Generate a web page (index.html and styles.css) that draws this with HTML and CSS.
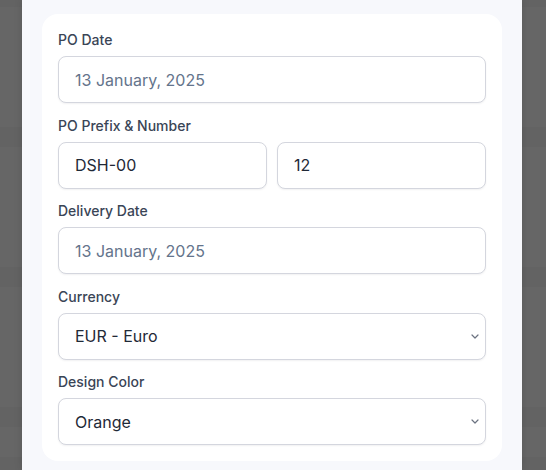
FILE: index.html
```html
<!DOCTYPE html>
<html lang="en">
<head>
<meta charset="utf-8">
<title>PO Settings</title>
<link rel="stylesheet" href="styles.css">
</head>
<body>
<div class="backdrop">
  <div class="panel">
    <form class="card">
      <div class="field">
        <label class="label">PO Date</label>
        <input class="control muted" type="text" value="13 January, 2025">
      </div>
      <div class="field">
        <label class="label">PO Prefix &amp; Number</label>
        <div class="pair">
          <input class="control" type="text" value="DSH-00">
          <input class="control" type="text" value="12">
        </div>
      </div>
      <div class="field">
        <label class="label">Delivery Date</label>
        <input class="control muted" type="text" value="13 January, 2025">
      </div>
      <div class="field">
        <label class="label">Currency</label>
        <div class="select-wrap">
          <select class="control select"><option>EUR - Euro</option></select>
          <svg class="chevron" width="8" height="5" viewBox="0 0 8 5"><path d="M1 1 L4 4 L7 1" fill="none" stroke="#6b7280" stroke-width="1.2" stroke-linecap="round" stroke-linejoin="round"/></svg>
        </div>
      </div>
      <div class="field">
        <label class="label">Design Color</label>
        <div class="select-wrap">
          <select class="control select"><option>Orange</option></select>
          <svg class="chevron" width="8" height="5" viewBox="0 0 8 5"><path d="M1 1 L4 4 L7 1" fill="none" stroke="#6b7280" stroke-width="1.2" stroke-linecap="round" stroke-linejoin="round"/></svg>
        </div>
      </div>
    </form>
  </div>
</div>
</body>
</html>
```

FILE: styles.css
```css
html, body {
  margin: 0;
  height: 100%;
}
body {
  font-family: Inter, "Noto Sans", sans-serif;
  background-color: #666666;
  background-image: repeating-linear-gradient(180deg, #666666 0, #666666 7px, #636363 7px, #636363 27px, #666666 27px, #666666 140px);
  background-position: 0 -20px;
  overflow: hidden;
}
.backdrop {
  height: 100%;
  padding: 0 24px 0 22px;
  box-sizing: border-box;
}
.panel {
  width: 500px;
  height: 100%;
  background: #f7f8fc;
  padding: 14px 20px 0;
  box-sizing: border-box;
  box-shadow: 0 0 8px rgba(0, 0, 0, 0.12);
}
.card {
  background: #ffffff;
  border-radius: 16px;
  padding: 16px;
  display: flex;
  flex-direction: column;
  gap: 12.5px;
  margin: 0;
}
.field {
  display: flex;
  flex-direction: column;
}
.label {
  font-size: 14px;
  line-height: 20px;
  font-weight: 500;
  color: #3a4556;
  margin-bottom: 6px;
}
.control {
  box-sizing: border-box;
  width: 100%;
  height: 47px;
  border: 1px solid #d4d6de;
  border-radius: 8px;
  background: #ffffff;
  padding: 0 16px;
  font-family: Inter, "Noto Sans", sans-serif;
  font-size: 16px;
  color: #1f2937;
  box-shadow: 0 1px 2px rgba(15, 23, 42, 0.06);
  outline: none;
  margin: 0;
}
.muted {
  color: #64748b;
}
.pair {
  display: flex;
  gap: 10px;
}
.pair .control {
  flex: 1;
  min-width: 0;
}
.select-wrap {
  position: relative;
}
.select {
  appearance: none;
  -webkit-appearance: none;
}
.chevron {
  position: absolute;
  right: 7px;
  top: 21px;
  pointer-events: none;
}
```
